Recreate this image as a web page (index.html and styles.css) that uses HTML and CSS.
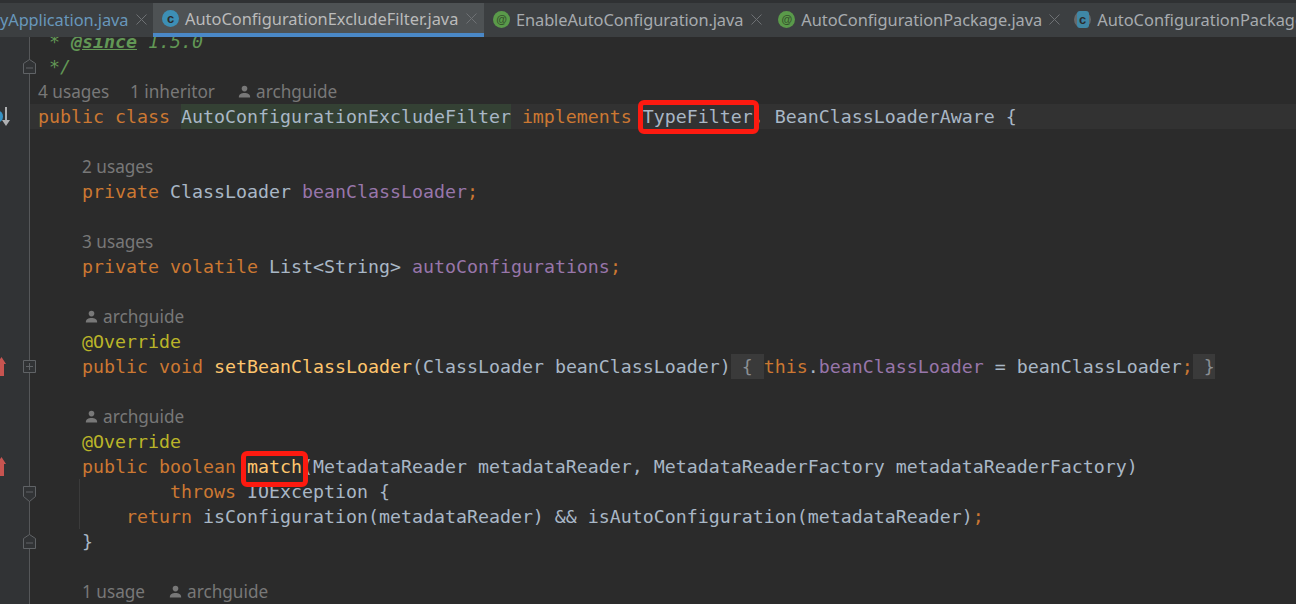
FILE: index.html
```html
<!DOCTYPE html>
<html lang="en">
<head>
<meta charset="utf-8">
<title>AutoConfigurationExcludeFilter.java</title>
<link rel="stylesheet" href="styles.css">
</head>
<body>
<div class="app">
  <div class="tabs">
    <div class="tab first"><span class="tab-name mod tight">yApplication.java</span><svg class="close" width="11" height="11" viewBox="0 0 11 11"><path d="M.5.5l10 10M10.500.5l-10 10"/></svg></div>
    <div class="tab active"><span class="ico cls">c</span><span class="tab-name">AutoConfigurationExcludeFilter.java</span><svg class="close" width="11" height="11" viewBox="0 0 11 11"><path d="M.5.5l10 10M10.500.5l-10 10"/></svg></div>
    <div class="tab t3"><span class="ico ann">@</span><span class="tab-name tight">EnableAutoConfiguration.java</span><svg class="close" width="11" height="11" viewBox="0 0 11 11"><path d="M.5.5l10 10M10.500.5l-10 10"/></svg></div>
    <div class="tab t4"><span class="ico ann">@</span><span class="tab-name">AutoConfigurationPackage.java</span><svg class="close" width="11" height="11" viewBox="0 0 11 11"><path d="M.5.5l10 10M10.500.5l-10 10"/></svg></div>
    <div class="tab"><span class="ico abs"><span class="abs-in">c</span></span><span class="tab-name">AutoConfigurationPackages.java</span></div>
  </div>
  <div class="editor">
    <div class="rows">
      <div class="row"><div class="gut"></div><div class="code doc"> * <span class="tag">@since</span> 1.5.0</div></div>
      <div class="row"><div class="gut"><svg class="fold" width="13" height="15" viewBox="0 0 13 15"><path d="M.5 14.5V4.5L6.5.5l6 4v10z"/><path d="M3 9h7"/></svg></div><div class="code doc"> */</div></div>
      <div class="row"><div class="gut"></div><div class="code hints"><span class="hint w92">4 usages</span><span class="hint w108">1 inheritor</span><svg class="person" width="13" height="13" viewBox="0 0 13 13"><circle cx="6.5" cy="3.6" r="2.8"/><path d="M.8 12.5c0-3.6 2.6-4.6 5.7-4.6s5.7 1 5.7 4.6z"/></svg><span class="hint">archguide</span></div></div>
      <div class="row"><div class="gut"><span class="impl-dot"></span><svg class="down" width="8" height="19" viewBox="0 0 8 19"><path d="M3 0h2v13h3l-4 6-4-6h3z"/></svg></div><div class="code caret"><span class="k">public class </span><span class="sel">AutoConfigurationExcludeFilter</span> <span class="k">implements </span><span class="mark mark-type">TypeFilter</span><span class="k">,</span> BeanClassLoaderAware {</div></div>
      <div class="row"><div class="gut"></div><div class="code"></div></div>
      <div class="row"><div class="gut"></div><div class="code hints in1"><span class="hint">2 usages</span></div></div>
      <div class="row"><div class="gut"></div><div class="code">    <span class="k">private </span>ClassLoader <span class="f">beanClassLoader</span><span class="k">;</span></div></div>
      <div class="row"><div class="gut"></div><div class="code"></div></div>
      <div class="row"><div class="gut"></div><div class="code hints in1"><span class="hint">3 usages</span></div></div>
      <div class="row"><div class="gut"></div><div class="code">    <span class="k">private volatile </span>List&lt;String&gt; <span class="f">autoConfigurations</span><span class="k">;</span></div></div>
      <div class="row"><div class="gut"></div><div class="code"></div></div>
      <div class="row"><div class="gut"></div><div class="code hints in1"><svg class="person lead" width="13" height="13" viewBox="0 0 13 13"><circle cx="6.5" cy="3.6" r="2.8"/><path d="M.8 12.5c0-3.6 2.6-4.6 5.7-4.6s5.7 1 5.7 4.6z"/></svg><span class="hint">archguide</span></div></div>
      <div class="row"><div class="gut"></div><div class="code">    <span class="a">@Override</span></div></div>
      <div class="row"><div class="gut"><svg class="up" width="6" height="19" viewBox="0 0 6 19"><path d="M0 7V19h4V7h2L1.500 0-3 7z"/></svg><svg class="fold sq" width="13" height="13" viewBox="0 0 13 13"><path d="M.5.5h12v12H.5z"/><path d="M3 6.500h7M6.500 3v7"/></svg></div><div class="code">    <span class="k">public void </span><span class="m">setBeanClassLoader</span>(ClassLoader beanClassLoader)<span class="cf"> { </span><span class="k">this</span>.<span class="f">beanClassLoader</span> = beanClassLoader<span class="k">;</span><span class="cf"> }</span></div></div>
      <div class="row"><div class="gut"></div><div class="code"></div></div>
      <div class="row"><div class="gut"></div><div class="code hints in1"><svg class="person lead" width="13" height="13" viewBox="0 0 13 13"><circle cx="6.5" cy="3.6" r="2.8"/><path d="M.8 12.5c0-3.6 2.6-4.6 5.7-4.6s5.7 1 5.7 4.6z"/></svg><span class="hint">archguide</span></div></div>
      <div class="row"><div class="gut"></div><div class="code">    <span class="a">@Override</span></div></div>
      <div class="row"><div class="gut"><svg class="up" width="6" height="19" viewBox="0 0 6 19"><path d="M0 7V19h4V7h2L1.500 0-3 7z"/></svg></div><div class="code">    <span class="k">public boolean </span><span class="mark mark-match m">match</span>(MetadataReader metadataReader, MetadataReaderFactory metadataReaderFactory)</div></div>
      <div class="row"><div class="gut"><svg class="fold low" width="13" height="16" viewBox="0 0 13 16"><path d="M.5.5h12v10l-6 5-6-5z"/><path d="M3 6h7"/></svg></div><div class="code guided">            <span class="k">throws </span>IOException {</div></div>
      <div class="row"><div class="gut"></div><div class="code guided">        <span class="k">return </span>isConfiguration(metadataReader) &amp;&amp; isAutoConfiguration(metadataReader)<span class="k">;</span></div></div>
      <div class="row"><div class="gut"><svg class="fold" width="13" height="15" viewBox="0 0 13 15"><path d="M.5 14.5V4.5L6.5.5l6 4v10z"/><path d="M3 9h7"/></svg></div><div class="code">    }</div></div>
      <div class="row"><div class="gut"></div><div class="code"></div></div>
      <div class="row"><div class="gut"></div><div class="code hints in1"><span class="hint w87">1 usage</span><svg class="person" width="13" height="13" viewBox="0 0 13 13"><circle cx="6.5" cy="3.6" r="2.8"/><path d="M.8 12.5c0-3.6 2.6-4.6 5.7-4.6s5.7 1 5.7 4.6z"/></svg><span class="hint">archguide</span></div></div>
    </div>
  </div>
</div>
</body>
</html>
```
FILE: styles.css
```css
*, *::after { box-sizing: border-box; }
html, body { margin: 0; height: 100%; background: #2b2b2b; overflow: hidden; }
.app { width: 1296px; height: 604px; display: flex; flex-direction: column; overflow: hidden; }

.tabs {
  height: 37px; flex: none; display: flex; background: #3c3f41;
  border-top: 3px solid #2f3133;
  font-family: "Noto Sans", sans-serif; font-size: 16.4px; color: #a7abaf;
  white-space: nowrap; overflow: hidden;
}
.tab { display: flex; align-items: center; height: 100%; padding: 0 8px 2px 9px; flex: none; }
.tab.first { padding-left: 0; width: 153px; }
.tab.active { background: #4e5254; border-bottom: 4px solid #4a88c7; padding-bottom: 0; width: 331px; color: #bbbbbb; padding-top: 1px; }
.tab.t3 { padding-right: 7px; }
.tab.t4 { padding-right: 5px; letter-spacing: -0.05px; }
.t4 .close { margin-left: 7px; }
.tab-name { margin-left: 6px; }
.tight { letter-spacing: -0.1px; }
.first .tab-name { margin-left: 0; }
.mod { color: #6897bb; }
.close { margin-left: 8px; stroke: #6e7174; stroke-width: 1; fill: none; flex: none; }
.ico {
  width: 17px; height: 17px; border-radius: 50%; flex: none; display: flex; align-items: center; justify-content: center;
  font-size: 13px; line-height: 1; color: #2b2b2b; font-family: "Liberation Sans", sans-serif; font-weight: 700;
}
.cls { background: #3d8fb5; }
.ann { background: #5a9a4a; color: #35522c; font-size: 11px; }
.abs { background: #66696b; }
.abs-in { width: 12px; height: 17px; border-radius: 3px; background: #3f87a6; display: flex; align-items: center; justify-content: center; }

.editor { flex: 1; overflow: hidden; background: #2b2b2b; }
.rows { margin-top: -8px; font-family: "DejaVu Sans Mono", monospace; font-size: 18.27px; color: #a9b7c6; }
.row { display: flex; height: 25px; }
.gut { width: 30px; flex: none; position: relative; background: #313335; border-right: 1px solid #555759; }
.code { flex: 1; padding-left: 8px; white-space: pre; line-height: 25px; }
.caret { background: #323232; }
.guided { background: linear-gradient(#3b3b3b, #3b3b3b) 49px 0 / 1px 100% no-repeat; }
.k { color: #cc7832; }
.f { color: #9876aa; }
.m { color: #ffc66d; }
.a { color: #bbb529; }
.doc { color: #629755; font-style: italic; }
.tag { font-weight: 700; text-decoration: underline; }
.sel { background: #344134; display: inline-block; height: 25px; }
.cf { background: #3a3a3a; display: inline-block; height: 25px; color: #8a8f94; }

.mark { position: relative; }
.mark::after { content: ""; position: absolute; border: 5px solid #fd1a10; border-radius: 6px; }
.mark-type::after { left: -5px; right: -6px; top: -6px; height: 34px; }
.mark-match::after { left: -6px; right: -6px; top: -5px; height: 36px; }

.hints { display: flex; align-items: center; font-family: "Noto Sans", sans-serif; font-size: 17.2px; color: #787878; }
.in1 { padding-left: 52px; }
.hint { flex: none; }
.w92 { width: 92px; }
.w108 { width: 108px; }
.w87 { width: 87px; }
.person { fill: #787878; margin-right: 5px; flex: none; }
.person.lead { margin-left: 3px; }

.fold { position: absolute; left: 23px; top: 5px; fill: #313335; stroke: #606366; stroke-width: 1; }
.fold.sq { top: 6px; }
.fold.low { top: 7px; }
.up { position: absolute; left: 0; top: 3px; fill: #c75450; }
.down { position: absolute; left: 2px; top: 3px; fill: #aeb0b2; }
.impl-dot { position: absolute; left: -6px; top: 7px; width: 9px; height: 11px; border-radius: 50%; background: #3592c4; }
```
